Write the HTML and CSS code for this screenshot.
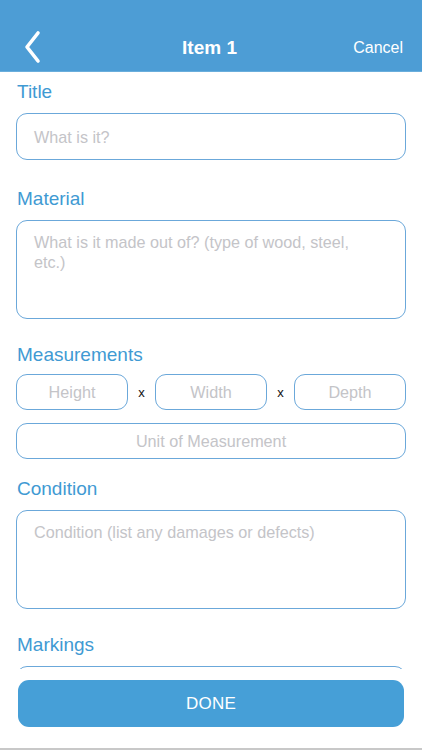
FILE: index.html
```html
<!DOCTYPE html>
<html>
<head>
<meta charset="utf-8">
<link rel="stylesheet" href="styles.css">
</head>
<body>
<div class="page">
  <header class="navbar">
    <div class="nav-left">
      <svg class="back" width="24" height="34" viewBox="0 0 24 34">
        <path d="M15 3 L4 17 L15 31" fill="none" stroke="#fff" stroke-width="3.6" stroke-linecap="round" stroke-linejoin="round"/>
      </svg>
    </div>
    <div class="nav-title">Item 1</div>
    <div class="nav-right">Cancel</div>
  </header>
  <main class="content">
    <div class="label">Title</div>
    <div class="field single"><span class="ph">What is it?</span></div>

    <div class="label">Material</div>
    <div class="field area"><span class="ph">What is it made out of? (type of wood, steel, etc.)</span></div>

    <div class="label">Measurements</div>
    <div class="dims">
      <div class="field small"><span class="ph">Height</span></div>
      <span class="times">x</span>
      <div class="field small"><span class="ph">Width</span></div>
      <span class="times">x</span>
      <div class="field small"><span class="ph">Depth</span></div>
    </div>
    <div class="field small unit"><span class="ph">Unit of Measurement</span></div>

    <div class="label cond">Condition</div>
    <div class="field area"><span class="ph">Condition (list any damages or defects)</span></div>

    <div class="label">Markings</div>
    <div class="field area"></div>
  </main>
  <footer class="footer">
    <button class="done">DONE</button>
  </footer>
</div>
</body>
</html>
```
FILE: styles.css
```css
* { box-sizing: border-box; }
html, body { margin: 0; padding: 0; background: #fff; }
body { font-family: "Liberation Sans", Arial, sans-serif; }
.page {
  width: 422px;
  height: 750px;
  display: flex;
  flex-direction: column;
  overflow: hidden;
}
.navbar {
  height: 72px;
  flex: none;
  background: #4d9dd5;
  display: flex;
  align-items: flex-end;
  padding: 0 19px 6px 16px;
  border-bottom: 1px solid #6aaedc;
}
.nav-left { width: 90px; height: 34px; display: flex; align-items: center; }
.back { margin-left: 7px; margin-top: -2px; }
.nav-title {
  flex: 1;
  text-align: center;
  color: #fff;
  font-weight: bold;
  font-size: 19px;
  line-height: 34px;
}
.nav-right {
  width: 90px;
  text-align: right;
  color: #fff;
  font-size: 16px;
  line-height: 34px;
}
.content {
  flex: 1;
  overflow: hidden;
  padding: 8px 16px 0 16px;
}
.label {
  color: #3f9ad3;
  font-size: 19px;
  line-height: 24px;
  margin: 0 0 9px 1px;
}
.field {
  border: 1.5px solid #6ba8da;
  border-radius: 11px;
  background: #fff;
}
.ph {
  color: #c4c4c8;
  font-size: 16.2px;
  line-height: 20px;
}
.single {
  height: 47px;
  display: flex;
  align-items: center;
  padding-left: 17px;
  margin-bottom: 27px;
}
.area {
  height: 99px;
  padding: 11px 22px 0 17px;
  margin-bottom: 24px;
}
.dims {
  display: flex;
  align-items: center;
  margin: -2px 0 13px 0;
}
.small {
  height: 36px;
  display: flex;
  align-items: center;
  justify-content: center;
  flex: 1;
}
.times {
  width: 27px;
  text-align: center;
  font-size: 13px;
  color: #111;
}
.unit { margin-bottom: 18px; }
.footer {
  flex: none;
  height: 81px;
  padding: 11px 18px 0 18px;
  border-bottom: 2px solid #c8c8c8;
  background: #fff;
}
.done {
  width: 100%;
  height: 47px;
  border: none;
  border-radius: 11px;
  background: #469fd7;
  color: #fff;
  font-family: "Liberation Sans", Arial, sans-serif;
  font-size: 17px;
  letter-spacing: 0.2px;
}
```
